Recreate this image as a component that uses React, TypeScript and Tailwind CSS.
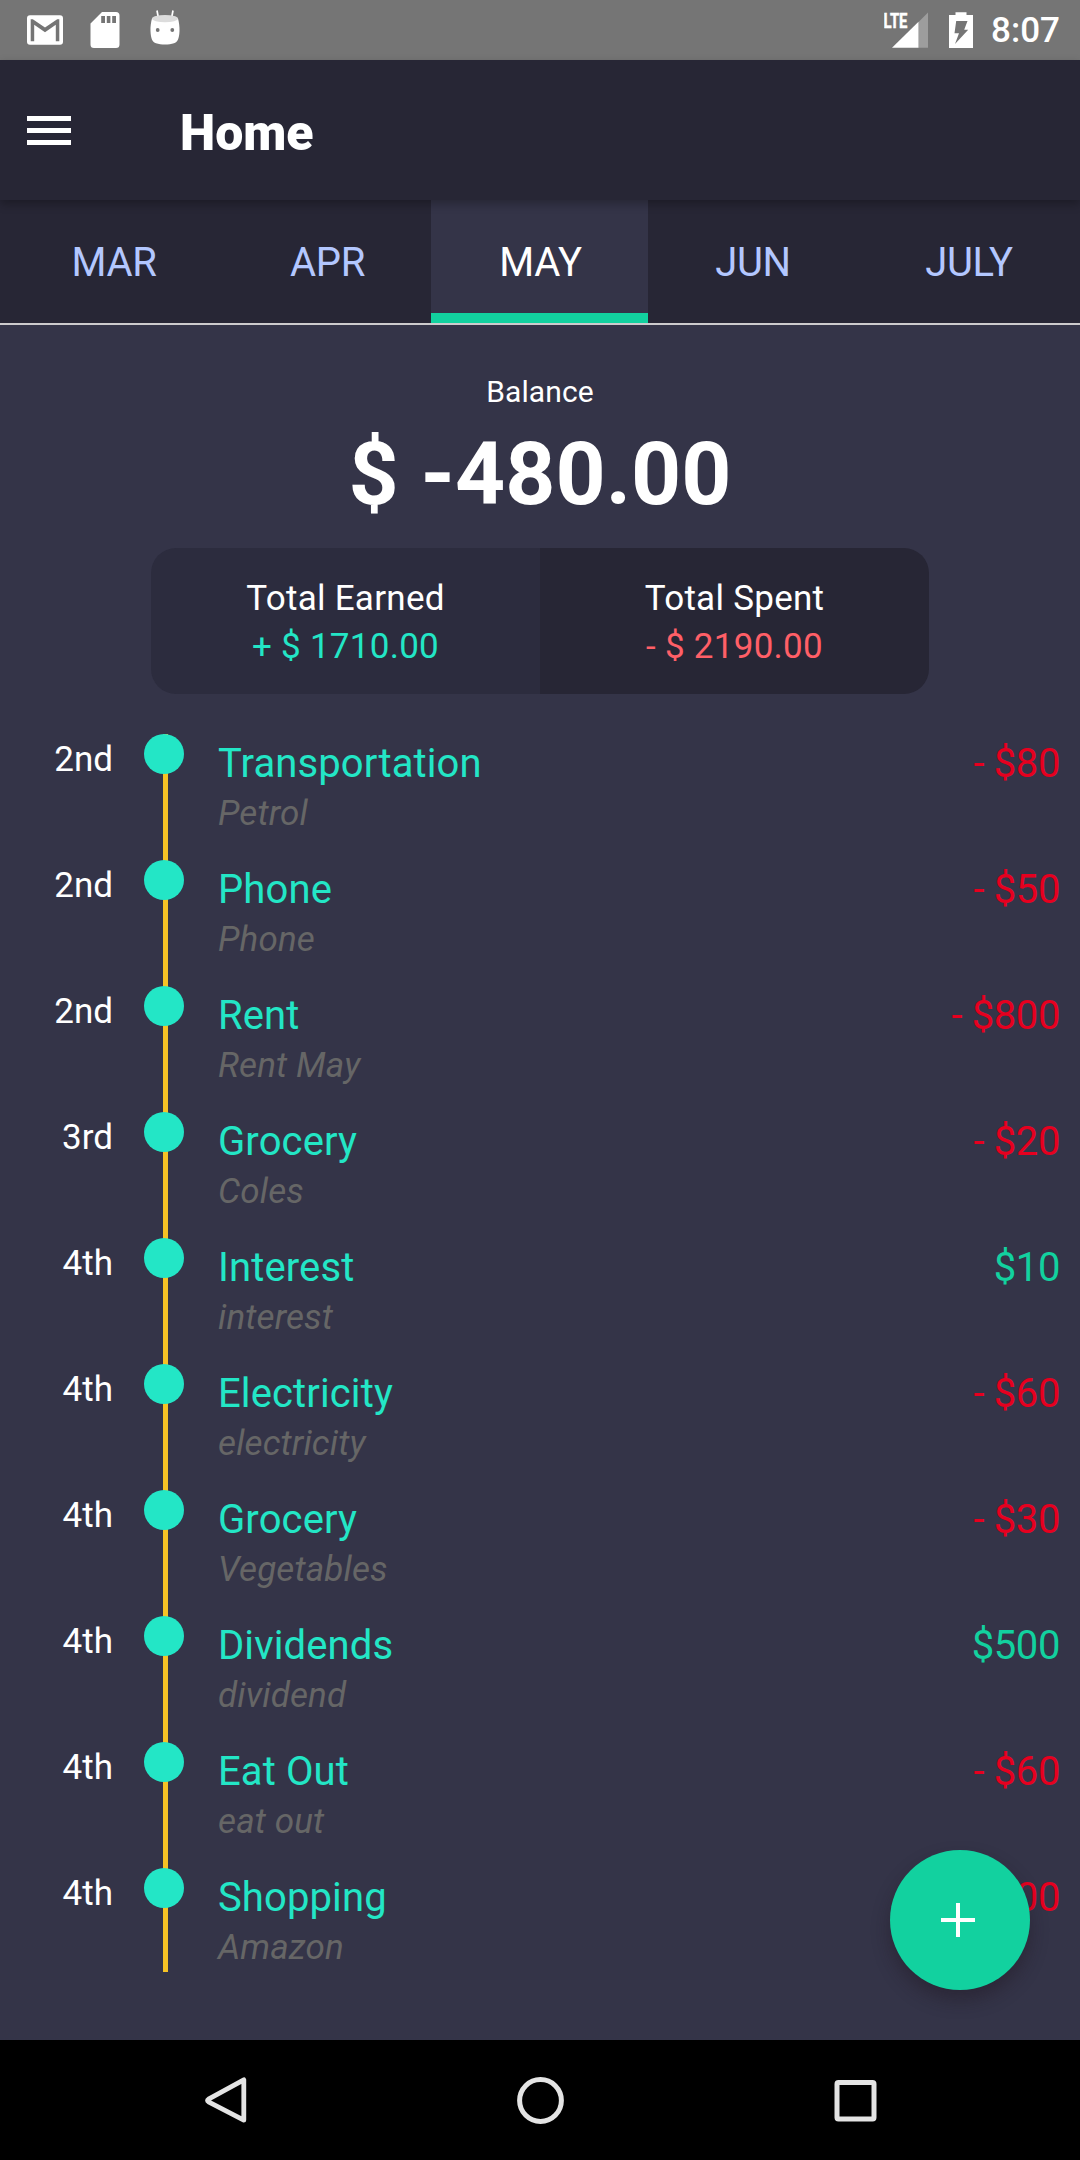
import React from "react";

type Entry = { day: string; title: string; note: string; amount: string; income?: boolean };

const entries: Entry[] = [
  { day: "2nd", title: "Transportation", note: "Petrol", amount: "- $80" },
  { day: "2nd", title: "Phone", note: "Phone", amount: "- $50" },
  { day: "2nd", title: "Rent", note: "Rent May", amount: "- $800" },
  { day: "3rd", title: "Grocery", note: "Coles", amount: "- $20" },
  { day: "4th", title: "Interest", note: "interest", amount: "$10", income: true },
  { day: "4th", title: "Electricity", note: "electricity", amount: "- $60" },
  { day: "4th", title: "Grocery", note: "Vegetables", amount: "- $30" },
  { day: "4th", title: "Dividends", note: "dividend", amount: "$500", income: true },
  { day: "4th", title: "Eat Out", note: "eat out", amount: "- $60" },
  { day: "4th", title: "Shopping", note: "Amazon", amount: "- $1000" },
];

const months = ["MAR", "APR", "MAY", "JUN", "JULY"];

function StatusBar() {
  return (
    <header className="flex h-[60px] shrink-0 items-start justify-between bg-[#757575]">
      <div className="flex h-full items-start">
        <svg className="ml-[27px] h-[60px] w-[36px]" viewBox="0 0 36 60">
          <path
            fill="#fff"
            fillRule="evenodd"
            d="M3 15.2h30a3 3 0 0 1 3 3v23.600a3 3 0 0 1-3 3H3a3 3 0 0 1-3-3V18.200a3 3 0 0 1 3-3zM3.700 19.200V41.200H7.200V24.700L18 32.200L28.800 24.700V41.200H32.300V19.200H30.200L18 27.500L5.800 19.200z"
          />
        </svg>
        <svg className="ml-[27px] h-[60px] w-[30px]" viewBox="0 0 30 60">
          <path
            fill="#fff"
            fillRule="evenodd"
            d="M12 12H26a3.500 3.500 0 0 1 3.500 3.500V44.500A3.500 3.500 0 0 1 26 48H4A3.500 3.500 0 0 1 .5 44.500V23.500zM11.200 16h3.800v7h-3.800zM16.800 16h3.600v7h-3.600zM22.200 16h3.800v7h-3.800z"
          />
        </svg>
        <svg className="ml-[30px] h-[60px] w-[30px]" viewBox="0 0 30 60">
          <path d="M7 10.500L8.600 19M23 10.500L21.400 19" stroke="#fff" strokeWidth="1.700" />
          <path
            fill="#fff"
            d="M2 18.500C1 22 .3 27 .5 31C.8 39 2.500 42 6 43.300C11 44.900 19 44.900 24 43.300C27.500 42 29.200 39 29.500 31C29.700 27 29 22 28 18.500z"
          />
          <ellipse cx="15" cy="18.600" rx="13" ry="3.600" fill="#dcdcdc" />
          <circle cx="7.700" cy="30" r="1.900" fill="#757575" />
          <circle cx="22.300" cy="30" r="1.900" fill="#757575" />
        </svg>
      </div>
      <div className="flex h-full items-start pr-[20px]">
        <svg className="h-[60px] w-[46px]" viewBox="0 0 46 60">
          <text
            x="-0.500"
            y="28.200"
            fill="#fff"
            stroke="#fff"
            strokeWidth="0.500"
            fontFamily="Roboto, sans-serif"
            fontWeight="700"
            fontSize="21"
            textLength="24"
            lengthAdjust="spacingAndGlyphs"
          >
            LTE
          </text>
          <path d="M34.500 22V47.800H44V12.500z" fill="#9d9d9d" />
          <path d="M8 47.800L34.500 21.800V47.800z" fill="#fff" />
        </svg>
        <svg className="ml-[19px] h-[60px] w-[24px]" viewBox="0 0 24 60">
          <path
            fill="#fff"
            fillRule="evenodd"
            d="M6.500 12.300H17.500V15H24V48H0V15H6.500zM7.200 21H18.500L15.200 29.800H19.200L6 44L10 33.200H5.500z"
          />
        </svg>
        <span className="ml-[18px] mt-[10px] text-[35px] leading-[41px] font-medium text-white">8:07</span>
      </div>
    </header>
  );
}

function AppBar() {
  return (
    <div className="relative z-10 flex h-[140px] shrink-0 items-center bg-[#272635] pl-[27px] shadow-[0_4px_9px_rgba(0,0,0,0.28)]">
      <button aria-label="Menu" className="mt-px flex w-[44px] flex-col gap-[7px]">
        <span className="h-[5px] bg-white" />
        <span className="h-[5px] bg-white" />
        <span className="h-[5px] bg-white" />
      </button>
      <h1 className="mt-[6px] ml-[109px] text-[50px] leading-[58px] font-black text-white">Home</h1>
    </div>
  );
}

function Tabs() {
  return (
    <nav className="grid h-[125px] shrink-0 grid-cols-[218px_209px_217px_208px_224px] border-b-2 border-[#cdcbcd] bg-[#272635] pl-[4px]">
      {months.map((m) =>
        m === "MAY" ? (
          <div key={m} className="border-b-[10px] border-[#12d19f] bg-[#343448] pt-[39px] pl-[2px] text-center text-[40px] leading-[47px] tracking-[-0.4px] text-white">
            {m}
          </div>
        ) : (
          <div key={m} className="pt-[39px] pl-[2px] text-center text-[40px] leading-[47px] tracking-[-0.4px] text-[#b3c7ff]">
            {m}
          </div>
        ),
      )}
    </nav>
  );
}

function Summary() {
  return (
    <section className="flex flex-col items-center pt-[49px] text-white">
      <p className="text-[30px] leading-[35px] tracking-[0.1px]">Balance</p>
      <p className="mt-[14px] text-[87.500px] leading-[103px] font-bold">$ -480.00</p>
      <div className="mt-[22px] grid h-[146px] w-[778px] grid-cols-2 overflow-hidden rounded-[25px] text-center text-[35px] leading-[41px] tracking-[0.27px]">
        <div className="bg-[#2c2c3e] pt-[30px]">
          <p>Total Earned</p>
          <p className="mt-[7px] text-[#23e6c6]">+ $ 1710.00</p>
        </div>
        <div className="bg-[#272635] pt-[30px]">
          <p>Total Spent</p>
          <p className="mt-[7px] text-[#ff5f67]">- $ 2190.00</p>
        </div>
      </div>
    </section>
  );
}

function Row({ entry, last }: { entry: Entry; last: boolean }) {
  return (
    <li className="flex h-[126px] items-start">
      <span className="w-[113px] pt-[5px] text-right text-[35px] leading-[41px] text-white">{entry.day}</span>
      <div className="relative ml-[31px] h-full w-[40px]">
        <div className={last ? "ml-[19px] h-[104px] w-[5px] bg-[#f6c225]" : "ml-[19px] h-full w-[5px] bg-[#f6c225]"} />
        <div className="absolute top-0 left-0 size-[40px] rounded-full bg-[#23e6c6]" />
      </div>
      <div className="ml-[34px] flex-1 pt-[6px]">
        <p className="text-[40px] leading-[47px] tracking-[0.12px] text-[#23e6c6]">{entry.title}</p>
        <p className="mt-[6px] text-[35px] leading-[41px] tracking-[0.14px] text-[#666666] italic">{entry.note}</p>
      </div>
      <span
        className={
          entry.income
            ? "pt-[6px] pr-[20px] text-[40px] leading-[47px] tracking-[-0.4px] text-[#12d19f]"
            : "pt-[6px] pr-[20px] text-[40px] leading-[47px] tracking-[-0.4px] text-[#e6001f]"
        }
      >
        {entry.amount}
      </span>
    </li>
  );
}

function NavBar() {
  return (
    <footer className="flex h-[120px] shrink-0 items-center justify-between bg-black px-[195px]">
      <svg className="size-[60px]" viewBox="0 0 60 60" fill="none" stroke="#e4e4e4" strokeWidth="4.800" strokeLinejoin="round">
        <path d="M48.800 9.800V50.200L13.500 31.800Q11.500 30.500 13.500 29.200z" />
      </svg>
      <svg className="size-[60px]" viewBox="0 0 60 60" fill="none" stroke="#e4e4e4" strokeWidth="5">
        <circle cx="30.500" cy="30.500" r="20.900" />
      </svg>
      <svg className="size-[60px]" viewBox="0 0 60 60" fill="none" stroke="#e4e4e4" strokeWidth="5">
        <rect x="12" y="12.500" width="37" height="36.500" rx="1.500" />
      </svg>
    </footer>
  );
}

export default function App() {
  return (
    <div className="relative flex h-[2160px] w-[1080px] flex-col overflow-hidden bg-[#343448] font-['Roboto',sans-serif]">
      <StatusBar />
      <AppBar />
      <Tabs />
      <main className="min-h-0 flex-1 overflow-hidden">
        <Summary />
        <ul className="mt-[40px]">
          {entries.map((e, i) => (
            <Row key={i} entry={e} last={i === entries.length - 1} />
          ))}
        </ul>
      </main>
      <NavBar />
      <button
        aria-label="Add"
        className="absolute right-[50px] bottom-[170px] flex size-[140px] items-center justify-center rounded-full bg-[#12d19f] shadow-[0_10px_18px_rgba(30,20,30,0.4)]"
      >
        <svg className="mr-[4px] size-[34px]" viewBox="0 0 34 34" stroke="#fff" strokeWidth="4">
          <path d="M17 0V34M0 17H34" />
        </svg>
      </button>
    </div>
  );
}
